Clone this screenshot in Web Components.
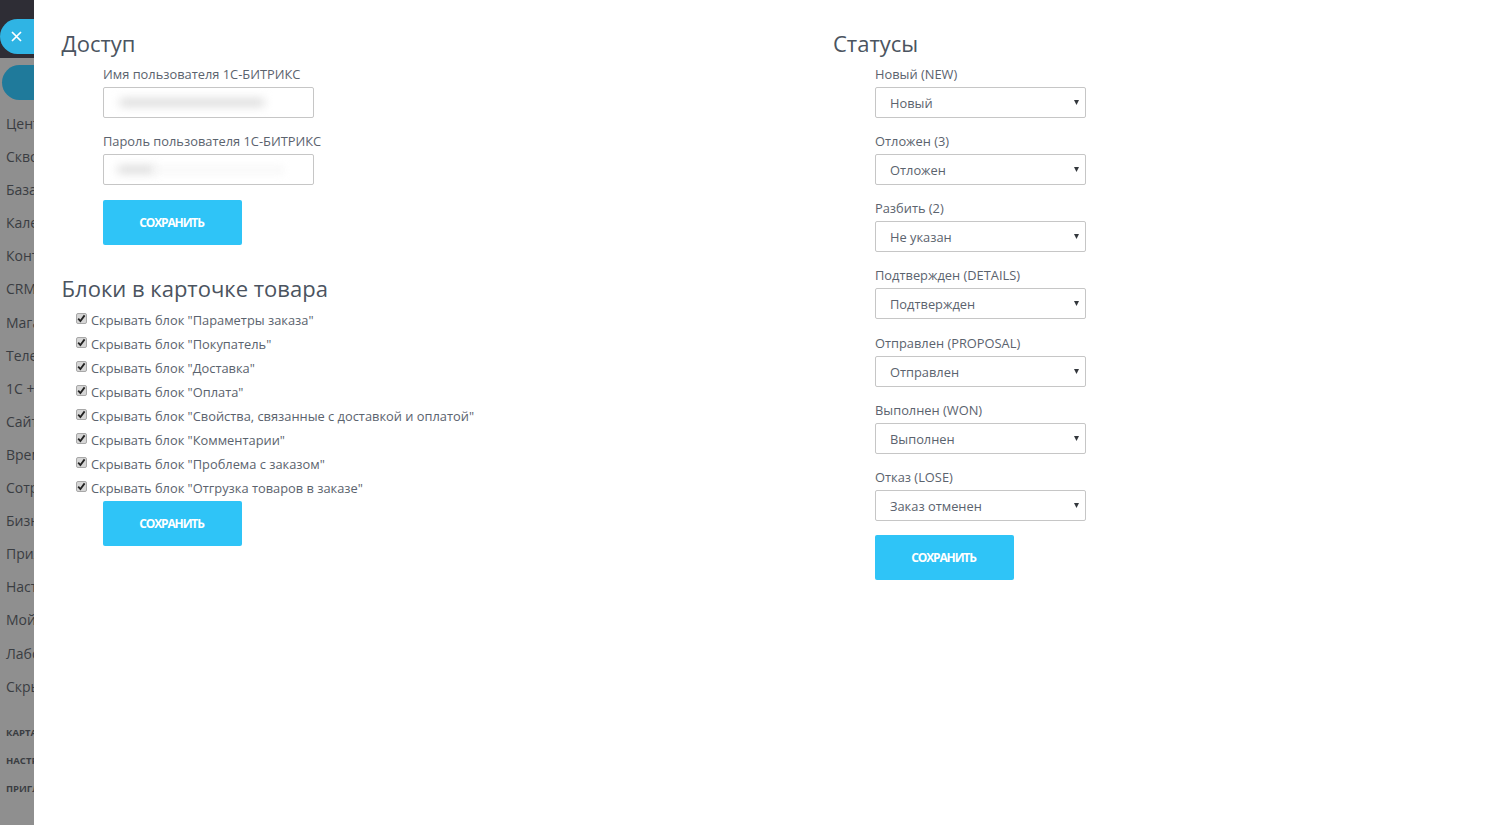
<!DOCTYPE html>
<html lang="ru">
<head>
<meta charset="utf-8">
<title>Настройки</title>
<style>
html, body { margin: 0; height: 100%; }
body { font-family: "Open Sans", "Liberation Sans", sans-serif; color: #535c69; background: #fff; }
</style>
</head>
<body>
<app-shell>
    <side-strip slot="side"></side-strip>

    <div slot="left">
        <form-section title="Доступ" nudge="0.6">
            <field-row label="Имя пользователя 1С-БИТРИКС"><blur-input from="16" to="160" faint="0"></blur-input></field-row>
            <field-row label="Пароль пользователя 1С-БИТРИКС"><blur-input from="14" to="50" faint="130"></blur-input></field-row>
            <save-button top="2"></save-button>
        </form-section>
        <form-section title="Блоки в карточке товара" nudge="0.6" tight>
            <check-row>Скрывать блок "Параметры заказа"</check-row>
            <check-row>Скрывать блок "Покупатель"</check-row>
            <check-row>Скрывать блок "Доставка"</check-row>
            <check-row>Скрывать блок "Оплата"</check-row>
            <check-row>Скрывать блок "Свойства, связанные с доставкой и оплатой"</check-row>
            <check-row>Скрывать блок "Комментарии"</check-row>
            <check-row>Скрывать блок "Проблема с заказом"</check-row>
            <check-row>Скрывать блок "Отгрузка товаров в заказе"</check-row>
            <save-button top="1"></save-button>
        </form-section>
    </div>

    <div slot="right">
        <form-section title="Статусы">
            <field-row label="Новый (NEW)"><status-select value="Новый"></status-select></field-row>
            <field-row label="Отложен (3)"><status-select value="Отложен"></status-select></field-row>
            <field-row label="Разбить (2)"><status-select value="Не указан"></status-select></field-row>
            <field-row label="Подтвержден (DETAILS)"><status-select value="Подтвержден"></status-select></field-row>
            <field-row label="Отправлен (PROPOSAL)"><status-select value="Отправлен"></status-select></field-row>
            <field-row label="Выполнен (WON)"><status-select value="Выполнен"></status-select></field-row>
            <field-row label="Отказ (LOSE)"><status-select value="Заказ отменен"></status-select></field-row>
            <save-button top="1"></save-button>
        </form-section>
    </div>
</app-shell>

<script>
class AppShell extends HTMLElement {
    constructor() {
        super();
        this.attachShadow({ mode: 'open' });
        this.shadowRoot.innerHTML = `
            <style>
                :host { display: flex; height: 825px; overflow: hidden; }
                .panel { flex: 1; display: flex; padding: 27px 0 0 27px; background: #fff; }
                .col { width: 772px; }
            </style>
            <slot name="side"></slot>
            <div class="panel">
                <div class="col"><slot name="left"></slot></div>
                <div class="col"><slot name="right"></slot></div>
            </div>`;
    }
}

class SideStrip extends HTMLElement {
    constructor() {
        super();
        this.attachShadow({ mode: 'open' });
        const items = ['Цент', 'Скво', 'База', 'Кале', 'Конт', 'CRM', 'Мага', 'Теле', '1С +', 'Сайт',
            'Врем', 'Сотр', 'Бизн', 'Прил', 'Наст', 'Мой', 'Лабо', 'Скры'];
        const small = ['КАРТА', 'НАСТР', 'ПРИГЛ'];
        this.shadowRoot.innerHTML = `
            <style>
                :host { display: flex; flex-direction: column; width: 34px; flex: none; overflow: hidden; background: #8f8f8f; color: #3a3d42; }
                .top { height: 58px; flex: none; background: #2e2d35; padding-top: 19px; box-sizing: border-box; }
                .close { width: 40px; height: 35px; border-radius: 18px 0 0 18px; background: #2fb4e4; display: flex; align-items: center; padding-left: 11px; box-sizing: border-box; }
                .pill { width: 40px; height: 35px; flex: none; margin: 7px 0 7px 2px; border-radius: 18px 0 0 18px; background: #1f7a9b; }
                .item { height: 33.1px; flex: none; padding-left: 6px; font-size: 14px; line-height: 33px; white-space: nowrap; }
                .small { height: 28px; flex: none; padding-left: 6px; font-size: 9.5px; font-weight: 700; line-height: 28px; white-space: nowrap; }
                .gap { height: 16px; flex: none; }
            </style>
            <div class="top">
                <div class="close">
                    <svg width="11" height="11" viewBox="0 0 11 11"><path d="M1 1l9 9M10 1l-9 9" stroke="#fff" stroke-width="1.7" fill="none"/></svg>
                </div>
            </div>
            <div class="pill"></div>
            ${items.map((t) => `<div class="item">${t}</div>`).join('')}
            <div class="gap"></div>
            ${small.map((t) => `<div class="small">${t}</div>`).join('')}`;
    }
}

class FormSection extends HTMLElement {
    constructor() {
        super();
        this.attachShadow({ mode: 'open' });
        const tight = this.hasAttribute('tight');
        const nudge = this.getAttribute('nudge') || 0;
        this.shadowRoot.innerHTML = `
            <style>
                :host { display: block; }
                h2 { margin: 0 0 0 ${nudge}px; font-size: 22px; font-weight: 400; line-height: 32px; color: #4b5460; }
                .body { display: flex; flex-direction: column; padding-top: ${tight ? '4px' : '5px'}; }
            </style>
            <h2>${this.getAttribute('title')}</h2>
            <div class="body"><slot></slot></div>`;
        this.removeAttribute('title');
    }
}

class FieldRow extends HTMLElement {
    constructor() {
        super();
        this.attachShadow({ mode: 'open' });
        this.shadowRoot.innerHTML = `
            <style>
                :host { display: block; margin: 0 0 13.15px 42px; }
                label { display: block; font-size: 12.85px; line-height: 20px; margin-bottom: 3px; color: #5b636e; }
            </style>
            <label>${this.getAttribute('label')}</label>
            <slot></slot>`;
    }
}

class BlurInput extends HTMLElement {
    constructor() {
        super();
        this.attachShadow({ mode: 'open' });
        const from = +this.getAttribute('from');
        const to = +this.getAttribute('to');
        const faint = +this.getAttribute('faint');
        this.shadowRoot.innerHTML = `
            <style>
                :host { display: flex; align-items: center; box-sizing: border-box; width: 211px; height: 31px; background: #fff; border: 1px solid #c6c6c6; border-radius: 2px; overflow: hidden; }
                .smear { height: 7px; flex: none; margin-left: ${from}px; width: ${to - from}px; background: #d6d6d6; filter: blur(5px); }
                .faint { height: 6px; flex: none; width: ${faint}px; background: #f5f5f5; filter: blur(4px); }
            </style>
            <div class="smear"></div>
            <div class="faint"></div>`;
    }
}

class StatusSelect extends HTMLElement {
    constructor() {
        super();
        this.attachShadow({ mode: 'open' });
        const value = this.getAttribute('value');
        this.shadowRoot.innerHTML = `
            <style>
                :host { display: block; position: relative; width: 211px; height: 31px; }
                select { appearance: none; display: block; box-sizing: border-box; width: 100%; height: 100%; padding: 1px 0 0 14px; margin: 0; background: #fff; border: 1px solid #c6c6c6; border-radius: 2px; font: 400 12.85px "Open Sans", "Liberation Sans", sans-serif; color: #5b636e; outline: 0; }
                svg { position: absolute; right: 7px; top: 13px; pointer-events: none; }
            </style>
            <select><option>${value}</option></select>
            <svg width="5" height="5" viewBox="0 0 5 5"><path d="M0 0h5L2.5 5z" fill="#33373c"/></svg>`;
    }
}

class CheckRow extends HTMLElement {
    constructor() {
        super();
        this.attachShadow({ mode: 'open' });
        this.shadowRoot.innerHTML = `
            <style>
                :host { display: flex; align-items: center; height: 24px; margin-left: 15px; font-size: 12.85px; color: #5b636e; white-space: nowrap; }
                .box { width: 11px; height: 11px; flex: none; box-sizing: border-box; margin: -3px 4px 0 0; background: #d6d6d6; border: 1px solid #a8a8a8; border-radius: 2px; display: flex; }
            </style>
            <span class="box">
                <svg width="9" height="9" viewBox="0 0 9 9"><path d="M1.2 4.6l2.2 2.4 4.2-5.6" stroke="#222" stroke-width="1.8" fill="none"/></svg>
            </span>
            <span><slot></slot></span>`;
    }
}

class SaveButton extends HTMLElement {
    constructor() {
        super();
        this.attachShadow({ mode: 'open' });
        const top = this.getAttribute('top') || 0;
        this.shadowRoot.innerHTML = `
            <style>
                :host { display: block; margin: ${top}px 0 27px 42px; }
                button { display: block; width: 139px; height: 45px; padding: 0 2px 0 0; border: 0; border-radius: 2px; background: #2fc4f7; color: #fff; font: 700 12px "Open Sans", "Liberation Sans", sans-serif; letter-spacing: -1.15px; }
            </style>
            <button type="button">СОХРАНИТЬ</button>`;
    }
}

customElements.define('app-shell', AppShell);
customElements.define('side-strip', SideStrip);
customElements.define('form-section', FormSection);
customElements.define('field-row', FieldRow);
customElements.define('blur-input', BlurInput);
customElements.define('status-select', StatusSelect);
customElements.define('check-row', CheckRow);
customElements.define('save-button', SaveButton);
</script>
</body>
</html>
